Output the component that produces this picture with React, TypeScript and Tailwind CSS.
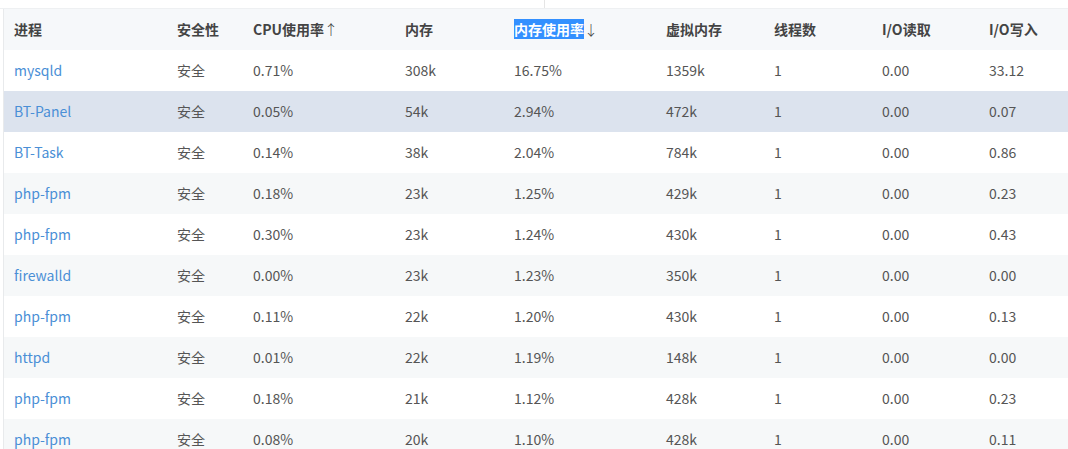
const rows = [
  ["mysqld","0.71%","308k","16.75%","1359k","1","0.00","33.12"],
  ["BT-Panel","0.05%","54k","2.94%","472k","1","0.00","0.07"],
  ["BT-Task","0.14%","38k","2.04%","784k","1","0.00","0.86"],
  ["php-fpm","0.18%","23k","1.25%","429k","1","0.00","0.23"],
  ["php-fpm","0.30%","23k","1.24%","430k","1","0.00","0.43"],
  ["firewalld","0.00%","23k","1.23%","350k","1","0.00","0.00"],
  ["php-fpm","0.11%","22k","1.20%","430k","1","0.00","0.13"],
  ["httpd","0.01%","22k","1.19%","148k","1","0.00","0.00"],
  ["php-fpm","0.18%","21k","1.12%","428k","1","0.00","0.23"],
  ["php-fpm","0.08%","20k","1.10%","428k","1","0.00","0.11"],
];
const cols = "grid grid-cols-[163px_76px_152px_109px_152px_108px_108px_107px_1fr]";
export default function App() {
  return (
    <div className="w-[1068px] h-[449px] overflow-hidden bg-white text-[14px] text-[#555]" style={{fontFamily:'"Noto Sans CJK SC","Noto Sans",sans-serif'}}>
      <div className="h-[9px] flex border-b border-[#eef0f2]"><div className="w-[545px] border-r border-[#e5e5e5]"></div></div>
      <div className="ml-[3px] border-l border-[#e8eaec]">
        <div className={`${cols} h-[41px] items-center bg-[#f6f8fa] font-bold text-[#444] pl-[10px]`}>
          <div>进程</div><div>安全性</div><div>CPU使用率<span className="font-light">↑</span></div><div>内存</div>
          <div><span className="bg-[#3390ff] text-white">内存使用率</span><span className="font-light">↓</span></div>
          <div>虚拟内存</div><div>线程数</div><div>I/O读取</div><div>I/O写入</div>
        </div>
        {rows.map((r,i)=>(
          <div key={i} className={`${cols} h-[41px] items-center pl-[10px] ${i===1?"bg-[#dce3ee]":i%2===1?"bg-[#f6f8f9]":"bg-white"}`}>
            <div className="text-[#4a8fd6]">{r[0]}</div><div>安全</div>
            {r.slice(1).map((c,j)=><div key={j}>{c}</div>)}
          </div>
        ))}
      </div>
    </div>
  );
}
